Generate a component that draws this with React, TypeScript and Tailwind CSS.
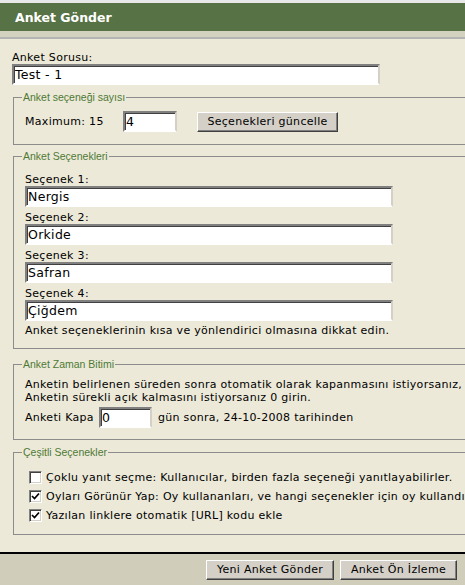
import type { ReactNode } from "react";

const inputCls =
  "block h-[21px] border-2 border-t-[#808080] border-l-[#808080] border-r-[#d4d0c8] border-b-[#ffffff] bg-white px-[1px] text-[12.5px] leading-[17px] tracking-[0.3px] text-black shadow-[inset_1px_1px_0_#404040] outline-none";

const buttonCls =
  "h-[20px] border border-t-white border-l-white border-r-[#404040] border-b-[#404040] bg-[#d4d0c8] px-[6px] text-[11px] leading-[16px] tracking-[0.3px] text-black shadow-[inset_-1px_-1px_0_#808080]";

function Group({
  title,
  className,
  children,
}: {
  title: string;
  className: string;
  children: ReactNode;
}) {
  return (
    <fieldset className={`ml-[1px] w-[580px] border border-[#8c8c8c] pl-[11px] ${className}`}>
      <legend className="-ml-[3px] px-[1px] text-[10.5px] leading-[13px] tracking-normal text-[#4e7a36] [font-family:'Liberation_Sans',Arial,sans-serif]">
        {title}
      </legend>
      {children}
    </fieldset>
  );
}

function Check({ on, children }: { on: boolean; children: ReactNode }) {
  return (
    <div className="flex h-[19px] items-center whitespace-nowrap">
      <span className="ml-[4px] mr-[4px] flex h-[13px] w-[13px] shrink-0 items-center justify-center border border-t-[#808080] border-l-[#808080] border-r-white border-b-white bg-white shadow-[inset_1px_1px_0_#404040,inset_-1px_-1px_0_#d4d0c8]">
        {on && (
          <svg width="9" height="9" viewBox="0 0 9 9">
            <path d="M1 4 L3.5 6.5 L8 1.5" stroke="#000" strokeWidth="1.7" fill="none" />
          </svg>
        )}
      </span>
      <span>{children}</span>
    </div>
  );
}

const options = ["Nergis", "Orkide", "Safran", "Çiğdem"];

export default function App() {
  return (
    <div className="relative h-[585px] w-[465px] overflow-hidden bg-[#ece9d8] text-[11px] leading-[13px] tracking-[0.3px] text-black [font-family:'DejaVu_Sans',Verdana,sans-serif]">
      <div className="h-[3px] bg-[#e8e8e8]" />
      <div className="flex h-[28px] items-center bg-[#577244] pl-[15px] text-[12.5px] font-bold tracking-normal text-white">
        Anket Gönder
      </div>
      <div className="h-[6px] bg-[#d3d1bf]" />
      <div className="h-[2px] bg-[#b4b4b4]" />

      <div className="px-[12px] pt-[12px]">
        <div className="h-[13px]">Anket Sorusu:</div>
        <input className={`${inputCls} w-[368px]`} defaultValue="Test - 1" />

        <Group title="Anket seçeneği sayısı" className="mt-[6px] pb-[12px] pt-[7px]">
          <div className="flex h-[21px] items-center">
            <span className="w-[98px]">Maximum: 15</span>
            <input className={`${inputCls} w-[54px]`} defaultValue="4" />
            <button className={`${buttonCls} ml-[20px] w-[141px]`}>Seçenekleri güncelle</button>
          </div>
        </Group>

        <Group title="Anket Seçenekleri" className="mt-[5px] pb-[11px] pt-[10px]">
          {options.map((o, i) => (
            <div key={o} className="mb-[4px]">
              <div className="h-[13px]">Seçenek {i + 1}:</div>
              <input className={`${inputCls} w-[368px]`} defaultValue={o} />
            </div>
          ))}
          <div className="-mt-[1px]">Anket seçeneklerinin kısa ve yönlendirici olmasına dikkat edin.</div>
        </Group>

        <Group title="Anket Zaman Bitimi" className="mt-[9px] pb-[11px] pt-[7px]">
          <div className="whitespace-nowrap">
            Anketin belirlenen süreden sonra otomatik olarak kapanmasını istiyorsanız, bu kutuya gün sayısını girin.
          </div>
          <div className="whitespace-nowrap">Anketin sürekli açık kalmasını istiyorsanız 0 girin.</div>
          <div className="mt-[3px] flex h-[21px] items-center whitespace-nowrap">
            <span className="w-[74px]">Anketi Kapa</span>
            <input className={`${inputCls} w-[53px]`} defaultValue="0" />
            <span className="ml-[6px]">gün sonra, 24-10-2008 tarihinden</span>
          </div>
        </Group>

        <Group title="Çeşitli Seçenekler" className="mt-[6px] pb-[9px] pt-[9px]">
          <Check on={false}>Çoklu yanıt seçme: Kullanıcılar, birden fazla seçeneği yanıtlayabilirler.</Check>
          <Check on>
            Oyları Görünür Yap: Oy kullananları, ve hangi seçenekler için oy kullandıklarını göster.
          </Check>
          <Check on>Yazılan linklere otomatik [URL] kodu ekle</Check>
        </Group>
      </div>

      <div className="mt-[17px] h-[2px] bg-black" />
      <div className="flex h-[31px] items-start justify-end gap-[6px] bg-[#d0ceba] pr-[8px] pt-[6px]">
        <button className={`${buttonCls} w-[128px]`}>Yeni Anket Gönder</button>
        <button className={`${buttonCls} w-[117px]`}>Anket Ön İzleme</button>
      </div>
    </div>
  );
}
